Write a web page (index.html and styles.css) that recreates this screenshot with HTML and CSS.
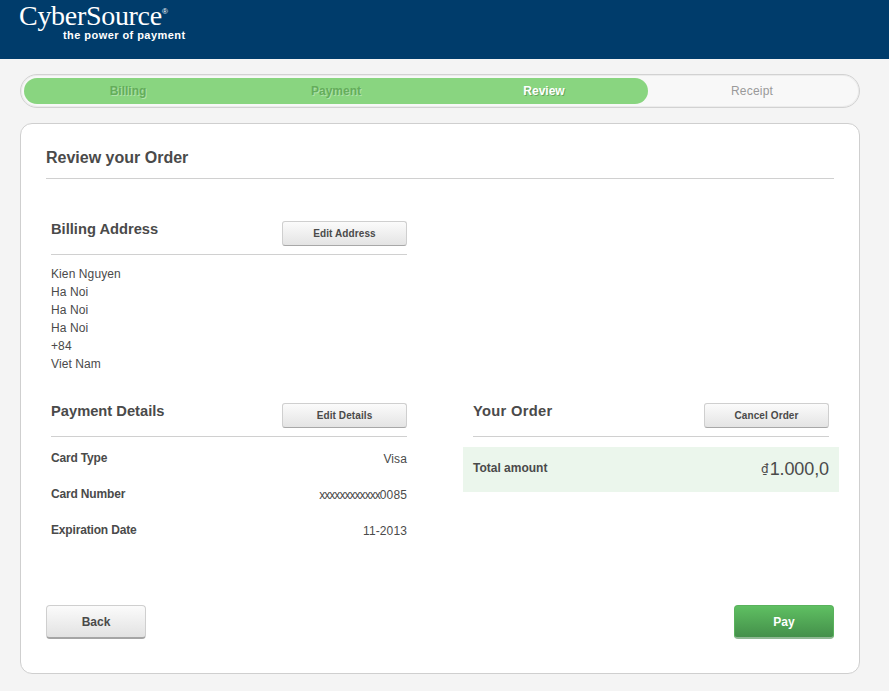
FILE: index.html
```html
<!DOCTYPE html>
<html lang="en">
<head>
<meta charset="utf-8">
<title>Review your Order</title>
<link rel="stylesheet" href="styles.css">
</head>
<body>
<header class="topbar">
  <div class="logo">
    <div class="logo-name">CyberSource<span class="logo-reg">®</span></div>
    <div class="logo-tag">the power of payment</div>
  </div>
</header>
<main class="page">
  <nav class="steps">
    <div class="steps-done">
      <span class="step step-past">Billing</span>
      <span class="step step-past">Payment</span>
      <span class="step step-current">Review</span>
    </div>
    <span class="step step-next">Receipt</span>
  </nav>
  <section class="card">
    <h1 class="card-title">Review your Order</h1>
    <div class="columns">
      <div class="block block-billing">
        <div class="block-head">
          <h2 class="block-title">Billing Address</h2>
          <button class="btn-small">Edit Address</button>
        </div>
        <address class="address">
          Kien Nguyen<br>Ha Noi<br>Ha Noi<br>Ha Noi<br>+84<br>Viet Nam
        </address>
      </div>
      <div class="block block-payment">
        <div class="block-head">
          <h2 class="block-title">Payment Details</h2>
          <button class="btn-small">Edit Details</button>
        </div>
        <dl class="details">
          <div class="detail"><dt>Card Type</dt><dd>Visa</dd></div>
          <div class="detail"><dt>Card Number</dt><dd><span class="mask">xxxxxxxxxxxx</span>0085</dd></div>
          <div class="detail"><dt>Expiration Date</dt><dd>11-2013</dd></div>
        </dl>
      </div>
      <div class="block block-order">
        <div class="block-head">
          <h2 class="block-title block-title-wide">Your Order</h2>
          <button class="btn-small">Cancel Order</button>
        </div>
        <div class="total">
          <span class="total-label">Total amount</span>
          <span class="total-value"><span class="currency">₫</span>1.000,0</span>
        </div>
      </div>
    </div>
    <div class="actions">
      <button class="btn-large btn-back">Back</button>
      <button class="btn-large btn-pay">Pay</button>
    </div>
  </section>
</main>
</body>
</html>
```
FILE: styles.css
```css
* { box-sizing: border-box; }
html, body { margin: 0; padding: 0; }
body {
  background: #f4f4f4;
  font-family: "Liberation Sans", Arial, sans-serif;
  color: #4a4a4a;
  font-size: 12px;
  height: 691px;
  overflow: hidden;
}
.topbar {
  height: 59px;
  background: #003c6b;
  padding: 0 0 0 19px;
  color: #fff;
}
.logo { width: 175px; }
.logo-name {
  font-family: "Liberation Serif", "Times New Roman", serif;
  font-size: 28px;
  line-height: 29px;
  height: 29px;
  padding-top: 1px;
  letter-spacing: -0.3px;
  white-space: nowrap;
}
.logo-reg {
  display: inline-block;
  font-family: "Liberation Sans", Arial, sans-serif;
  font-size: 8px;
  line-height: 8px;
  letter-spacing: 0;
  vertical-align: 11px;
}
.logo-tag {
  font-size: 11px;
  font-weight: bold;
  line-height: 13px;
  padding-left: 44px;
  letter-spacing: 0.44px;
  white-space: nowrap;
}
.page { padding: 15px 29px 0 20px; }
.steps {
  display: flex;
  align-items: center;
  height: 34px;
  margin-bottom: 15px;
  padding: 3px;
  background: #f8f8f8;
  border: 1px solid #d2d2d2;
  border-radius: 17px;
  box-shadow: inset 0 0 0 1px #ececec;
}
.steps-done {
  display: grid;
  grid-template-columns: repeat(3, 208px);
  width: 624px;
  height: 26px;
  background: #89d580;
  border-radius: 13px;
}
.step {
  display: flex;
  align-items: center;
  justify-content: center;
  font-size: 12px;
  font-weight: bold;
  height: 26px;
}
.step-past { color: #64ad5b; text-shadow: 1px 1px 0 rgba(255,255,255,0.35); }
.step-current { color: #fff; text-shadow: 1px 1px 0 rgba(70,120,60,0.5); }
.step-next { width: 208px; font-weight: normal; color: #9a9a9a; letter-spacing: 0.2px; }
.card {
  height: 551px;
  background: #fff;
  border: 1px solid #cfcfcf;
  border-radius: 12px;
  padding: 0 25px;
}
.card-title {
  margin: 0;
  height: 55px;
  padding-top: 25px;
  font-size: 16px;
  line-height: 18px;
  font-weight: bold;
  color: #4a4a4a;
  border-bottom: 1px solid #d0d0d0;
}
.columns {
  display: grid;
  grid-template-columns: 366px 366px;
  justify-content: space-between;
  padding-top: 42px;
  row-gap: 30px;
}
.block { padding: 0 5px; }
.block-billing { grid-column: 1; grid-row: 1; }
.block-payment { grid-column: 1; grid-row: 2; }
.block-order { grid-column: 2; grid-row: 2; }
.block-head {
  display: flex;
  justify-content: space-between;
  align-items: flex-start;
  height: 34px;
  border-bottom: 1px solid #d0d0d0;
}
.block-title {
  margin: 0;
  font-size: 14.7px;
  line-height: 16px;
  font-weight: bold;
  color: #4a4a4a;
}
.block-title-wide { letter-spacing: 0.3px; }
.btn-small {
  width: 125px;
  height: 25px;
  padding: 0;
  font-family: inherit;
  font-size: 10px;
  font-weight: bold;
  letter-spacing: 0.1px;
  color: #4a4a4a;
  background: linear-gradient(#fbfbfb, #e4e4e4);
  border: 1px solid #cfcfcf;
  border-bottom-color: #a8a8a8;
  border-radius: 3px;
}
.address {
  font-style: normal;
  font-size: 12px;
  line-height: 18px;
  padding-top: 10px;
  letter-spacing: 0.1px;
  color: #4a4a4a;
}
.details { margin: 0; padding-top: 3px; }
.detail {
  display: flex;
  justify-content: space-between;
  height: 36px;
  align-items: center;
}
.detail dt { font-weight: bold; margin-top: -1px; letter-spacing: -0.17px; }
.detail dd { margin: 1px 0 0; letter-spacing: 0.12px; }
.mask { letter-spacing: -0.95px; }
.total {
  display: flex;
  justify-content: space-between;
  align-items: center;
  height: 45px;
  margin: 10px -10px 0;
  padding: 0 10px;
  background: #ebf6ec;
}
.total-label { font-weight: bold; margin-top: -3px; }
.total-value { font-size: 18px; line-height: 20px; margin-top: -1px; letter-spacing: -0.1px; }
.currency { font-family: "DejaVu Sans", sans-serif; font-size: 12px; vertical-align: 2px; margin-right: 1px; }
.actions {
  display: flex;
  justify-content: space-between;
  margin-top: 57px;
}
.btn-large {
  width: 100px;
  height: 34px;
  padding: 0;
  font-family: inherit;
  font-size: 12px;
  font-weight: bold;
  border-radius: 4px;
}
.btn-back {
  color: #4a4a4a;
  background: linear-gradient(#fbfbfb, #e2e2e2);
  border: 1px solid #cfcfcf;
  border-bottom: 2px solid #a5a5a5;
}
.btn-pay {
  color: #fff;
  background: linear-gradient(#5fbf62, #44904a);
  border: 1px solid #59b25c;
  border-bottom: 2px solid #8fb893;
}
```
